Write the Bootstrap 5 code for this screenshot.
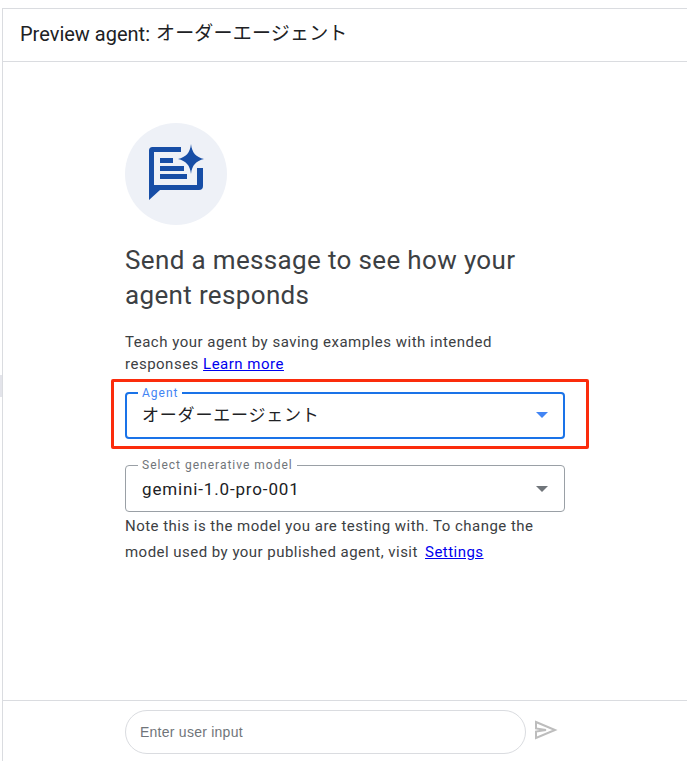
<!DOCTYPE html>
<html lang="en">
<head>
  <meta charset="UTF-8" />
  <meta name="viewport" content="width=device-width, initial-scale=1.0"/>
  <title>Preview agent</title>
  <link href="https://cdn.jsdelivr.net/npm/bootstrap@5.3.0/dist/css/bootstrap.min.css" rel="stylesheet"/>
  <script src="https://cdn.jsdelivr.net/npm/bootstrap@5.3.0/dist/js/bootstrap.bundle.min.js"></script>
  <style>
    html, body {
      height: 761px;
      overflow: hidden;
    }
    body {
      font-family: Roboto, "Noto Sans CJK JP", sans-serif;
      background: #fff;
      color: #3c4043;
      padding-top: 8px;
    }
    .preview-shell {
      height: 753px;
      border-top: 1px solid #dadce0;
      border-left: 1px solid #dadce0;
      margin-left: 2px;
    }
    .preview-head {
      height: 53px;
      padding: 0 0 2px 17px;
      border-bottom: 1px solid #dadce0;
      font-size: 20px;
      color: #202124;
    }
    .preview-head .jp-name {
      font-size: 19px;
      letter-spacing: .2px;
      margin-left: 1px;
    }
    .preview-main {
      padding: 61px 0 0 122px;
    }
    .icon-circle {
      width: 102px;
      height: 102px;
      border-radius: 50%;
      background: #eef1f7;
    }
    .preview-title {
      width: 440px;
      margin: 18px 0 0;
      font-size: 26px;
      line-height: 35px;
      letter-spacing: .35px;
      font-weight: 400;
      color: #3c4043;
    }
    .preview-hint {
      width: 400px;
      margin: 18px 0 0;
      font-size: 15px;
      line-height: 22px;
      letter-spacing: .5px;
    }
    .preview-hint a, .model-note a {
      color: #0000ee;
    }
    .outline-field {
      width: 440px;
      height: 53px;
      margin: 0;
      padding: 0 16px;
      border: 1px solid #9aa0a6;
      border-radius: 4px;
      color: #202124;
    }
    .outline-field legend {
      float: none;
      width: auto;
      margin: 0 0 0 -4px;
      padding: 0 4px;
      font-size: 12px;
      line-height: 12px;
      letter-spacing: 1px;
      color: #70757a;
    }
    .outline-field .field-value {
      font-size: 17px;
      line-height: 36px;
      letter-spacing: .85px;
    }
    .field-arrow {
      width: 0;
      height: 0;
      border-left: 6px solid transparent;
      border-right: 6px solid transparent;
      border-top: 6px solid #70757a;
    }
    .agent-field {
      margin-top: 11px;
      border: 2px solid #1a73e8;
      padding: 0 15px;
    }
    .agent-field legend {
      line-height: 14px;
      color: #4285f4;
    }
    .agent-field .field-value {
      line-height: 30px;
      letter-spacing: .8px;
    }
    .agent-field .field-arrow {
      border-top-color: #4285f4;
    }
    .model-field {
      margin-top: 20px;
    }
    .callout-box {
      position: absolute;
      left: 111px;
      top: 379px;
      width: 478px;
      height: 70px;
      border: 3px solid #fb2c0c;
      border-radius: 2px;
      pointer-events: none;
    }
    .side-handle {
      position: absolute;
      left: 0;
      top: 375px;
      width: 2px;
      height: 22px;
      background: #e3e4ea;
    }
    .model-note {
      width: 440px;
      margin: 1px 0 0;
      font-size: 15px;
      line-height: 26px;
      letter-spacing: .47px;
    }
    .model-note a {
      margin-left: 3px;
    }
    .preview-foot {
      height: 61px;
      border-top: 1px solid #dadce0;
      padding: 9px 0 0 122px;
    }
    .user-input {
      width: 401px;
      height: 44px;
      padding: 0 14px;
      border: 1px solid #dadce0;
      border-radius: 22px;
      font-family: "Liberation Sans", sans-serif;
      font-size: 14px;
      letter-spacing: .25px;
      color: #5f6368;
    }
    .user-input::placeholder {
      color: #70757a;
      opacity: 1;
    }
    .user-input:focus {
      outline: none;
    }
  </style>
</head>
<body>
  <div class="preview-shell d-flex flex-column">
    <div class="preview-head d-flex align-items-center">Preview agent:&nbsp;<span class="jp-name">オーダーエージェント</span></div>

    <div class="preview-main flex-grow-1">
      <div class="icon-circle d-flex align-items-center justify-content-center">
        <svg width="56" height="62" viewBox="0 -2 56 62" fill="#174ea6">
          <path d="M1 55V5.500Q1 2 4.500 2H33V7H6V40H49V23H55V41Q55 45 51 45H12Z"/>
          <rect x="12" y="13" width="13" height="5"/>
          <rect x="12" y="21" width="24" height="5"/>
          <rect x="12" y="29" width="27" height="5"/>
          <path d="M43 -1C44 8 48 12 56 14C48 16 44 20 43 29C42 20 38 16 30 14C38 12 42 8 43 -1Z"/>
        </svg>
      </div>
      <h1 class="preview-title">Send a message to see how your agent responds</h1>
      <p class="preview-hint">Teach your agent by saving examples with intended responses <a href="#">Learn more</a></p>

      <fieldset class="outline-field agent-field d-block">
        <legend>Agent</legend>
        <div class="d-flex align-items-center justify-content-between">
          <span class="field-value">オーダーエージェント</span>
          <span class="field-arrow"></span>
        </div>
      </fieldset>

      <fieldset class="outline-field model-field d-block">
        <legend>Select generative model</legend>
        <div class="d-flex align-items-center justify-content-between">
          <span class="field-value">gemini-1.0-pro-001</span>
          <span class="field-arrow"></span>
        </div>
      </fieldset>

      <p class="model-note">Note this is the model you are testing with. To change the model used by your published agent, visit <a href="#">Settings</a></p>
    </div>

    <div class="preview-foot d-flex align-items-start gap-2">
      <input class="user-input" type="text" placeholder="Enter user input">
      <svg class="mt-2" width="24" height="24" viewBox="0 0 24 24" fill="none">
        <path d="M2 4L21 12L2 20V13.500L12 12L2 10.500Z" stroke="#bdbdbd" stroke-width="2"/>
      </svg>
    </div>
  </div>
  <div class="callout-box"></div>
  <div class="side-handle"></div>
</body>
</html>
